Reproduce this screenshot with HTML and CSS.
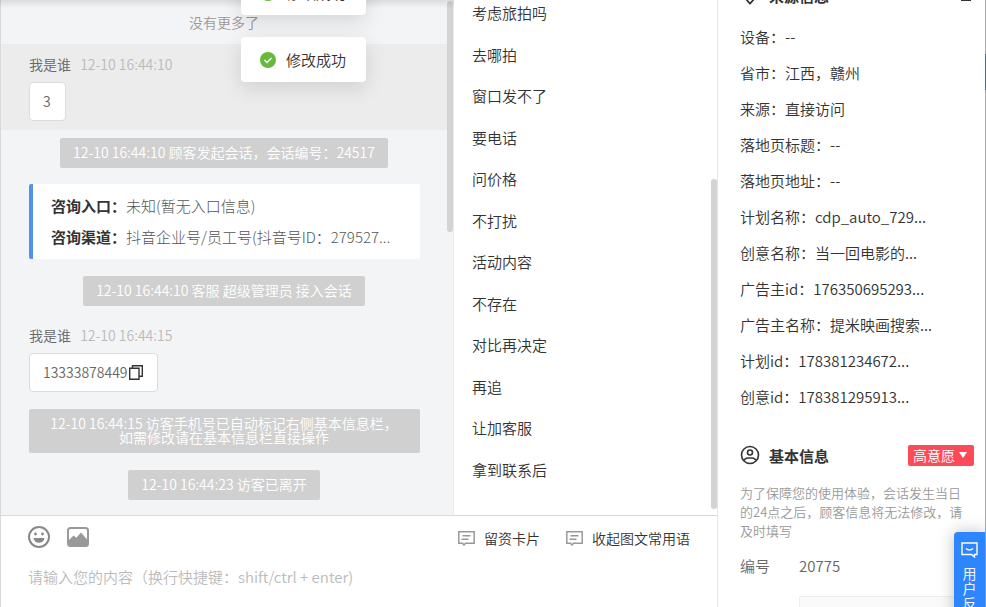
FILE: index.html
```
<!DOCTYPE html>
<html lang="zh-CN">
    <head>
        <title>在线客服</title>
        <meta charset="utf-8" />
        <meta name="viewport" content="width=device-width, initial-scale=1.0">
        <link rel="stylesheet" href="styles.css">
    </head>
    <body>
        <main class="workspace">
            <div class="panels">
                <section class="chat">
                    <div class="chat-content">
                        <p class="no-more">没有更多了</p>
                        <div class="message active">
                            <div class="message-meta">我是谁 <time>12-10 16:44:10</time></div>
                            <div class="bubble">3</div>
                        </div>
                        <p class="notice">12-10 16:44:10 顾客发起会话，会话编号：24517</p>
                        <div class="entry-card">
                            <p><strong>咨询入口：</strong>未知(暂无入口信息)</p>
                            <p><strong>咨询渠道：</strong>抖音企业号/员工号(抖音号ID：279527...</p>
                        </div>
                        <p class="notice">12-10 16:44:10 客服 超级管理员 接入会话</p>
                        <div class="message">
                            <div class="message-meta">我是谁 <time>12-10 16:44:15</time></div>
                            <div class="bubble">13333878449<button type="button" class="icon-btn" aria-label="复制"><svg width="14" height="15" viewBox="0 0 14 15" fill="none" stroke="#333" stroke-width="1.4"><path d="M.7 3.200h9.300v11H.7zM3.500 3V.7h9.800v10.600H10.200" /></svg></button></div>
                        </div>
                        <p class="notice notice-wide">12-10 16:44:15 访客手机号已自动标记右侧基本信息栏，<br>如需修改请在基本信息栏直接操作</p>
                        <p class="notice">12-10 16:44:23 访客已离开</p>
                    </div>
                    <div class="scroll-track"><div class="thumb chat-thumb"></div></div>
                </section>
                <section class="phrases">
                    <ul class="phrase-list">
                        <li>考虑旅拍吗</li>
                        <li>去哪拍</li>
                        <li>窗口发不了</li>
                        <li>要电话</li>
                        <li>问价格</li>
                        <li>不打扰</li>
                        <li>活动内容</li>
                        <li>不存在</li>
                        <li>对比再决定</li>
                        <li>再追</li>
                        <li>让加客服</li>
                        <li>拿到联系后</li>
                    </ul>
                    <div class="scroll-track phrase-track"><div class="thumb phrase-thumb"></div></div>
                </section>
            </div>
            <section class="composer">
                <div class="toolbar">
                    <button type="button" class="icon-btn" aria-label="表情">
                        <svg width="22" height="22" viewBox="0 0 22 22"><circle cx="11" cy="11" r="10" fill="none" stroke="#888" stroke-width="2" /><circle cx="7.5" cy="8" r="1.4" fill="#888" /><circle cx="14.5" cy="8" r="1.4" fill="#888" /><path d="M5.5 12h11c-.3 3-2.500 4.700-5.500 4.700s-5.200-1.700-5.500-4.700z" fill="#888" /></svg>
                    </button>
                    <button type="button" class="icon-btn" aria-label="图片">
                        <svg width="22" height="20" viewBox="0 0 22 20"><rect x="1" y="1" width="20" height="18" rx="2.500" fill="none" stroke="#999" stroke-width="2" /><path d="M1 14L6.500 8.500l2.800 2.300L14 5.500l7 8V19H1z" fill="#999" /></svg>
                    </button>
                    <button type="button" class="tool-btn tool-first">
                        <svg width="17" height="15" viewBox="0 0 17 15" fill="none" stroke="#999" stroke-width="1.500"><path d="M.8.8h15.400v11.400H7.500L6 14l-1.500-1.800H.8zM4.500 4.700h8M3.500 8.300h7" /></svg>
                        留资卡片
                    </button>
                    <button type="button" class="tool-btn">
                        <svg width="17" height="15" viewBox="0 0 17 15" fill="none" stroke="#999" stroke-width="1.500"><path d="M.8.8h15.400v11.400H7.500L6 14l-1.500-1.800H.8zM4.500 4.700h8M3.500 8.300h7" /></svg>
                        收起图文常用语
                    </button>
                </div>
                <textarea class="composer-input" aria-label="消息内容" placeholder="请输入您的内容（换行快捷键：shift/ctrl + enter)"></textarea>
            </section>
        </main>

        <aside class="sidebar">
            <header class="side-header">
                <svg width="20" height="20" viewBox="0 0 20 20" fill="none" stroke="#333" stroke-width="1.800"><path d="M10 18.500C6 14.500 3.500 11.500 3.500 8a6.500 6.500 0 0 1 13 0c0 3.500-2.500 6.500-6.500 10.500z" /><circle cx="10" cy="8" r="2" /></svg>
                <h2>来源信息</h2>
                <button type="button" class="icon-btn side-edit" aria-label="编辑"><svg width="10" height="12" viewBox="0 0 10 12" stroke="#333" stroke-width="2"><path d="M0 11h10M5 0v7" /></svg></button>
            </header>
            <dl class="source-list">
                <div><dt>设备：</dt><dd>--</dd></div>
                <div><dt>省市：</dt><dd>江西，赣州</dd></div>
                <div><dt>来源：</dt><dd>直接访问</dd></div>
                <div><dt>落地页标题：</dt><dd>--</dd></div>
                <div><dt>落地页地址：</dt><dd>--</dd></div>
                <div><dt>计划名称：</dt><dd>cdp_auto_729...</dd></div>
                <div><dt>创意名称：</dt><dd>当一回电影的...</dd></div>
                <div><dt>广告主id：</dt><dd>176350695293...</dd></div>
                <div><dt>广告主名称：</dt><dd>提米映画搜索...</dd></div>
                <div><dt>计划id：</dt><dd>178381234672...</dd></div>
                <div><dt>创意id：</dt><dd>178381295913...</dd></div>
            </dl>
            <header class="side-header">
                <svg width="20" height="20" viewBox="0 0 20 20" fill="none" stroke="#333" stroke-width="1.600"><circle cx="10" cy="10" r="8.500" /><circle cx="10" cy="7.500" r="2.500" /><path d="M4 15.500c1-2 2.500-2.500 4-2.500h4c1.500 0 3 .5 4 2.500" /></svg>
                <h2>基本信息</h2>
                <button type="button" class="intent">高意愿<svg width="8" height="6" viewBox="0 0 8 6"><path d="M0 0h8L4 6z" fill="#fff" /></svg></button>
            </header>
            <p class="side-note">为了保障您的使用体验，会话发生当日的24点之后，顾客信息将无法修改，请及时填写</p>
            <div class="field"><span>编号</span><span>20775</span></div>
            <div class="field"><input type="text" class="field-input" aria-label="姓名"></div>
        </aside>

        <div class="top-shadow"></div>
        <div class="edge-mark"></div>
        <div class="toasts">
            <div class="toast" role="status">
                <svg width="16" height="16" viewBox="0 0 16 16"><circle cx="8" cy="8" r="8" fill="#67b93e" /><path d="M4.500 8l2.500 2.500 4.500-4.500" fill="none" stroke="#fff" stroke-width="1.400" /></svg>
                修改成功
            </div>
            <div class="toast" role="status">
                <svg width="16" height="16" viewBox="0 0 16 16"><circle cx="8" cy="8" r="8" fill="#67b93e" /><path d="M4.500 8l2.500 2.500 4.500-4.500" fill="none" stroke="#fff" stroke-width="1.400" /></svg>
                修改成功
            </div>
        </div>
        <button type="button" class="feedback">
            <svg width="17" height="16" viewBox="0 0 17 16" fill="none" stroke="#fff" stroke-width="1.400"><path d="M1 1h15v11.500h-2.500V15L10.500 12.500H1zM5 6.500c2 2 5 2 7 0" /></svg>
            <span>用户反馈</span>
        </button>
    </body>
</html>
```
FILE: styles.css
```
* {
    box-sizing: border-box;
}

body {
    margin: 0;
    display: flex;
    height: 100vh;
    overflow: hidden;
    position: relative;
    font-family: "Noto Sans CJK SC", sans-serif;
    font-size: 15px;
    font-weight: 350;
    color: #333;
    background: #fff;
}

p, h2, ul, dl, dd {
    margin: 0;
    padding: 0;
}

button, input, textarea {
    font-family: inherit;
    font-weight: inherit;
    color: inherit;
}

button {
    border: 0;
    padding: 0;
    background: none;
    cursor: pointer;
}

svg {
    display: block;
    flex-shrink: 0;
}

.workspace {
    flex: 1;
    min-width: 0;
    display: flex;
    flex-direction: column;
    border-left: 1px solid #d8d9da;
    border-right: 1px solid #e4e4e4;
}

.panels {
    flex: 1;
    min-height: 0;
    display: flex;
    overflow: hidden;
}

/* chat */
.chat {
    flex: 1;
    min-width: 0;
    display: flex;
    background: #f3f4f6;
    border-right: 1px solid #e8eaeb;
}

.chat-content {
    flex: 1;
    min-width: 0;
    display: flex;
    flex-direction: column;
    align-items: center;
}

.no-more {
    padding: 12px 0;
    line-height: 20px;
    font-size: 14px;
    color: #999;
}

.message {
    width: 100%;
    padding: 12px 28px 9px;
    font-size: 14px;
}

.message.active {
    background: #ececec;
}

.message-meta {
    margin-bottom: 10px;
    line-height: 16px;
    color: #666;
}

.message-meta time {
    margin-left: 6px;
    color: #bbb;
}

.bubble {
    display: flex;
    align-items: center;
    gap: 1px;
    width: fit-content;
    padding: 10px 14px 10px 13px;
    line-height: 17px;
    color: #666;
    background: #fff;
    border: 1px solid #dcdcdc;
    border-radius: 4px;
}

.notice {
    max-width: calc(100% - 55px);
    margin: 8px 0 9px;
    padding: 7px 13px 9px;
    line-height: 14px;
    font-size: 14px;
    text-align: center;
    color: #fff;
    background: #d0d0d0;
    border-radius: 2px;
}

.notice-wide {
    width: 100%;
}

.entry-card {
    align-self: stretch;
    margin: 7px 27px 9px 28px;
    padding: 6px 18px 7px;
    line-height: 31px;
    color: #555;
    background: #fff;
    border-left: 4px solid #5590ee;
    border-radius: 2px;
}

.entry-card p {
    overflow: hidden;
    white-space: nowrap;
    font-weight: 300;
}

.entry-card strong {
    font-weight: 600;
    color: #333;
}

/* scroll bars */
.scroll-track {
    width: 6px;
    padding-top: 1px;
}

.thumb {
    background: #d3d3d3;
    border-radius: 3px;
}

.chat-thumb {
    height: 45%;
}

/* phrases */
.phrases {
    width: 263px;
    display: flex;
}

.phrase-list {
    flex: 1;
    display: flex;
    flex-direction: column;
    margin-top: -8px;
    padding: 0 18px 25px;
    list-style: none;
}

.phrase-list li {
    flex: 1;
    display: flex;
    align-items: center;
}

.phrase-track {
    display: flex;
    align-items: flex-end;
    padding-bottom: 6px;
}

.phrase-thumb {
    width: 6px;
    height: 65%;
}

/* composer */
.composer {
    height: 92px;
    padding: 9px 27px 0 27px;
    border-top: 1px solid #d8d9da;
}

.toolbar {
    display: flex;
    align-items: center;
    gap: 17px;
    height: 24px;
}

.tool-btn {
    display: flex;
    align-items: center;
    gap: 9px;
    margin-left: 9px;
    padding-top: 2px;
    font-size: 14px;
    line-height: 20px;
}

.tool-first {
    margin-left: auto;
}

.composer-input {
    display: block;
    width: 100%;
    height: 50px;
    margin-top: 17px;
    padding: 0;
    border: 0;
    outline: 0;
    resize: none;
    overflow: hidden;
    font-size: 15px;
    line-height: 22px;
}

.composer-input::placeholder {
    color: #bbb;
}

/* sidebar */
.sidebar {
    width: 268px;
    padding: 0 11px 0 22px;
    overflow: hidden;
    border-right: 1px solid #aaa;
}

.side-header {
    display: flex;
    align-items: center;
    height: 30px;
}

.side-header:first-child {
    margin-top: -20px;
    margin-bottom: 9px;
}

.side-header h2 {
    margin-left: 9px;
    font-size: 15px;
    font-weight: 700;
}

.side-edit {
    margin-left: auto;
    margin-right: 3px;
}

.source-list {
    margin-bottom: 25px;
}

.source-list div {
    display: flex;
    line-height: 36px;
    white-space: nowrap;
}

.intent {
    display: flex;
    align-items: center;
    gap: 4px;
    margin-left: auto;
    padding: 0 7px 0 5px;
    font-size: 14px;
    line-height: 21px;
    color: #fff;
    background: #fc4b58;
    border-radius: 2px;
}

.side-note {
    margin: 13px 0 15px;
    padding-right: 8px;
    line-height: 19px;
    font-size: 13px;
    color: #999;
}

.field {
    display: grid;
    grid-template-columns: 59px 1fr;
    line-height: 22px;
    margin-bottom: 19px;
    color: #666;
}

.field-input {
    grid-column: 2;
    width: 100%;
    height: 34px;
    border: 1px solid #eee;
    background: #fafafa;
    border-radius: 2px;
}

/* things floating over the page */
.top-shadow {
    position: absolute;
    top: 0;
    left: 0;
    width: 454px;
    height: 8px;
    background: linear-gradient(rgba(0, 0, 0, 0.1), rgba(0, 0, 0, 0));
}

.edge-mark {
    position: absolute;
    top: 54px;
    right: 0;
    width: 1px;
    height: 36px;
    background: #3d7082;
}

.toasts {
    position: absolute;
    top: -30px;
    left: 241px;
    display: grid;
    gap: 22px;
}

.toast {
    display: flex;
    align-items: center;
    gap: 10px;
    height: 45px;
    padding: 0 20px 0 19px;
    background: #fff;
    border-radius: 4px;
    box-shadow: 0 6px 20px rgba(0, 0, 0, 0.12);
}

.feedback {
    position: absolute;
    top: 532px;
    right: 1px;
    width: 31px;
    padding: 10px 7px;
    display: flex;
    flex-direction: column;
    align-items: center;
    gap: 8px;
    font-size: 14px;
    line-height: 15px;
    color: #fff;
    background: #2e86ff;
    border-radius: 4px 0 0 4px;
    box-shadow: 0 0 16px rgba(0, 0, 0, 0.25);
}
```
